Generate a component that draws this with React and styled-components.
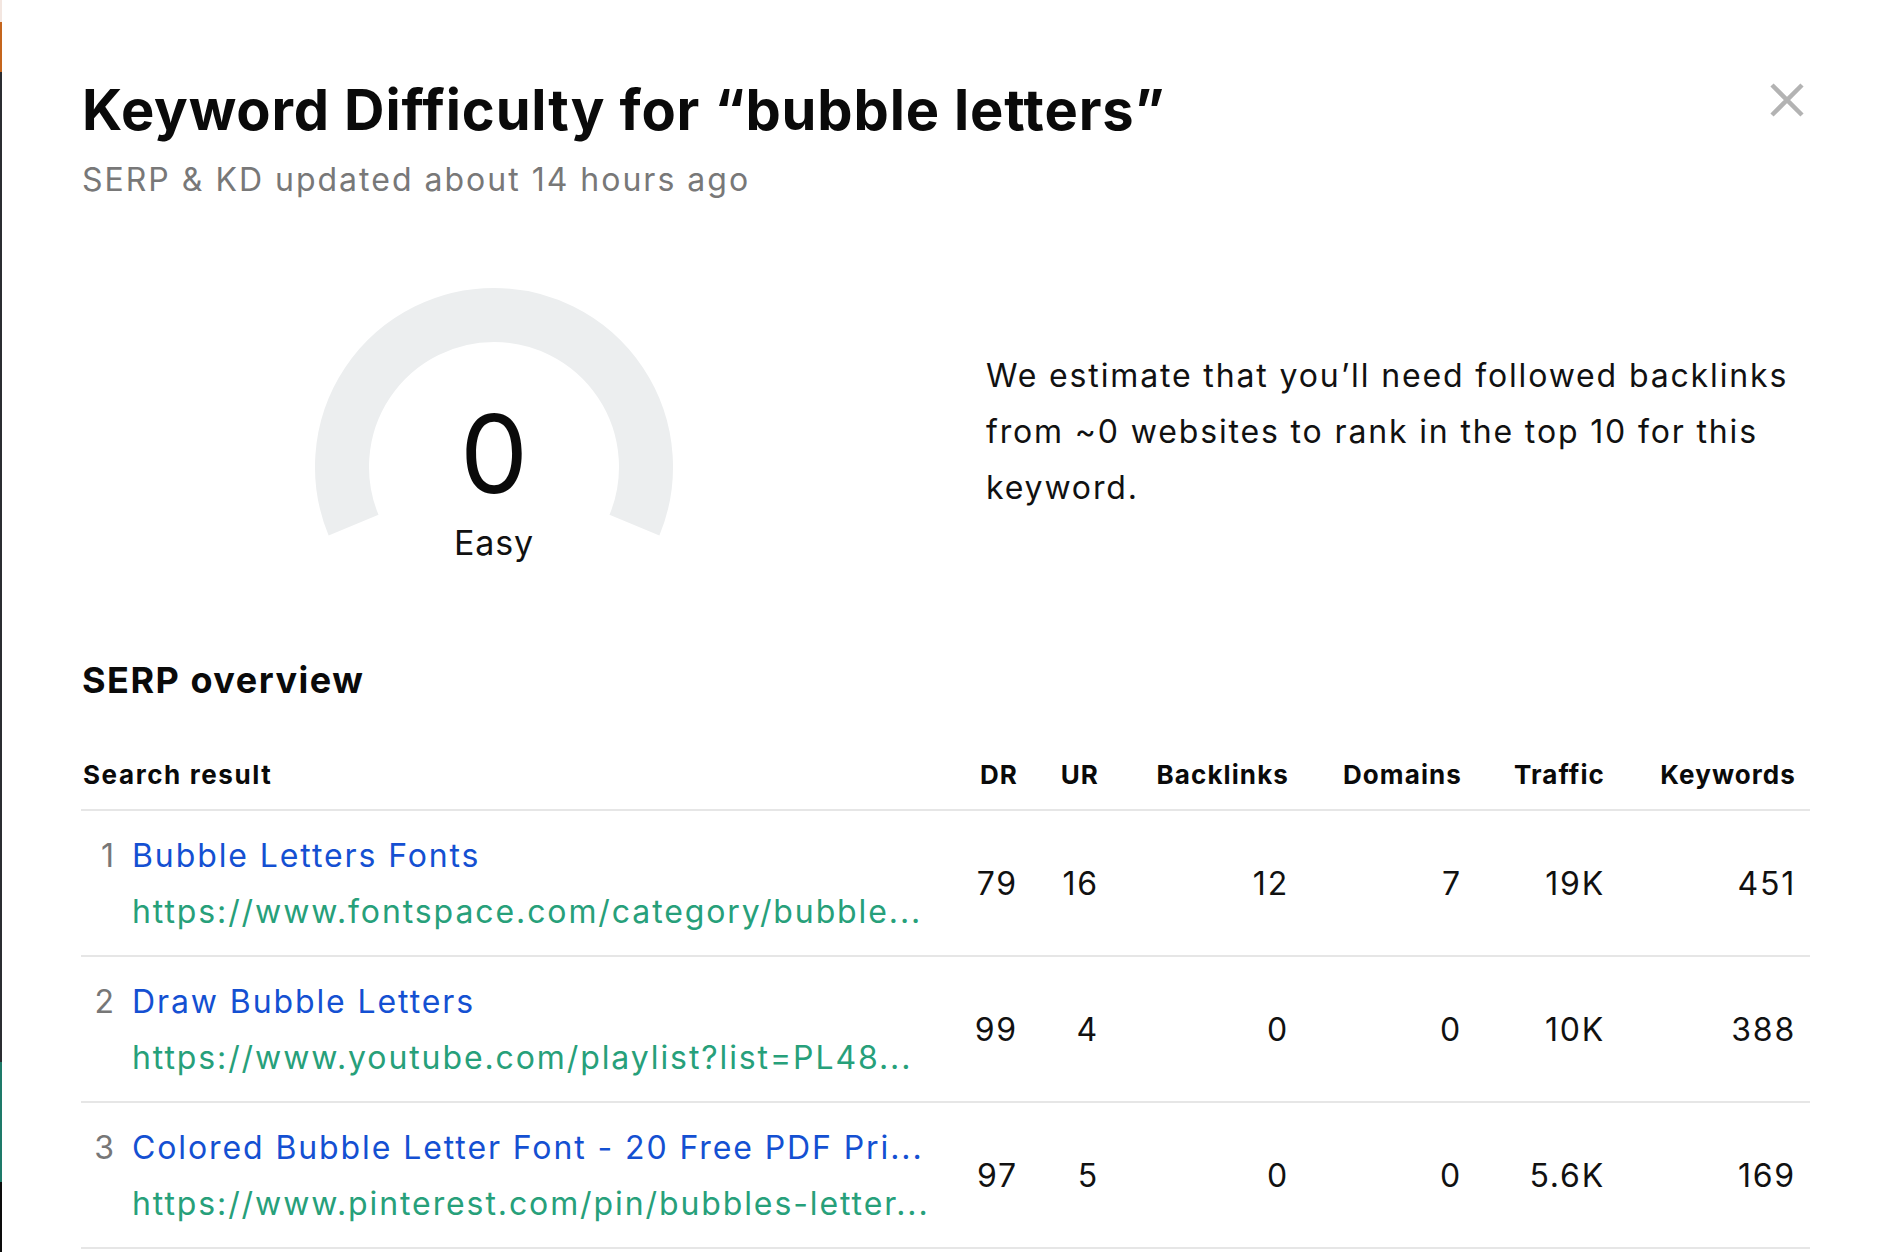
import React from "react";
import styled, { createGlobalStyle } from "styled-components";

const Global = createGlobalStyle`
  html, body { margin: 0; padding: 0; background: #ffffff; }
  body { font-family: Inter, "Noto Sans", "Liberation Sans", sans-serif; color: #111111; }
  * { box-sizing: border-box; }
`;

const Page = styled.div`
  display: flex;
  min-height: 1252px;
  width: 1888px;
`;

const Backdrop = styled.div`
  flex: 0 0 2px;
  background: linear-gradient(
    to bottom,
    #f3e6e0 0px, #f3e6e0 22px,
    #c5651d 22px, #c5651d 72px,
    #2b2d31 72px, #2b2d31 1062px,
    #1e7a69 1062px, #1e7a69 1182px,
    #0c0c0c 1182px
  );
`;

const Modal = styled.div`
  flex: 1;
  background: #ffffff;
  padding: 76px 78px 0 80px;
  display: flex;
  flex-direction: column;
`;

const Header = styled.div`
  display: flex;
  justify-content: space-between;
  align-items: flex-start;
`;

const TitleBlock = styled.div`
  display: flex;
  flex-direction: column;
`;

const Title = styled.h1`
  margin: 0;
  font-size: 56px;
  line-height: 68px;
  font-weight: 700;
  letter-spacing: 0.85px;
  color: #0a0a0a;
`;

const Subtitle = styled.div`
  margin-top: 12px;
  font-size: 32px;
  line-height: 48px;
  letter-spacing: 2px;
  color: #787878;
`;

const CloseButton = styled.button`
  margin-top: 1px;
  width: 46px;
  height: 46px;
  border: 0;
  padding: 0;
  background: transparent;
  display: flex;
  align-items: center;
  justify-content: center;
  cursor: pointer;
`;

const Summary = styled.div`
  margin-top: 84px;
  display: grid;
  grid-template-columns: 1fr 1fr;
  column-gap: 80px;
  align-items: start;
`;

const Gauge = styled.div`
  justify-self: center;
  position: relative;
  width: 360px;
  height: 276px;
  display: flex;
  flex-direction: column;
  align-items: center;
  padding-top: 112px;
`;

const GaugeArc = styled.svg`
  position: absolute;
  left: 0;
  top: 0;
`;

const Score = styled.div`
  position: relative;
  font-size: 108px;
  line-height: 108px;
  font-weight: 400;
  color: #0a0a0a;
`;

const ScoreLabel = styled.div`
  position: relative;
  margin-top: 15px;
  font-size: 34px;
  line-height: 40px;
  letter-spacing: 0.8px;
  color: #111111;
`;

const Estimate = styled.p`
  margin: 60px 0 0;
  font-size: 32px;
  line-height: 56px;
  letter-spacing: 1.85px;
  color: #111111;
`;

const SectionTitle = styled.h2`
  margin: 94px 0 0;
  font-size: 36px;
  line-height: 44px;
  font-weight: 700;
  letter-spacing: 1.5px;
  color: #0a0a0a;
`;

const Table = styled.div`
  margin-top: 57px;
  margin-left: -1px;
  display: grid;
  grid-template-columns: 1fr 90px 81px 190px 173px 143px 191px;
`;

const HeadCell = styled.div`
  font-size: 26px;
  line-height: 32px;
  font-weight: 700;
  letter-spacing: ${(p) => (p.$left ? "1.6px" : "1.1px")};
  color: #0a0a0a;
  padding: 0 ${(p) => (p.$left ? "0" : "14px")} 18px ${(p) => (p.$left ? "2px" : "0")};
  text-align: ${(p) => (p.$left ? "left" : "right")};
  border-bottom: 2px solid #e6e6e6;
`;

const Cell = styled.div`
  display: flex;
  align-items: center;
  justify-content: flex-end;
  padding: 0 14px 0 0;
  font-size: 32px;
  letter-spacing: 1.8px;
  color: #111111;
  border-bottom: 2px solid #e6e6e6;
  height: 146px;
`;

const ResultCell = styled.div`
  display: flex;
  align-items: flex-start;
  padding: 17px 0 15px 0;
  border-bottom: 2px solid #e6e6e6;
  height: 146px;
  min-width: 0;
`;

const Rank = styled.div`
  flex: 0 0 33px;
  text-align: right;
  font-size: 32px;
  line-height: 56px;
  color: #777777;
  margin-right: 18px;
`;

const ResultText = styled.div`
  display: flex;
  flex-direction: column;
  min-width: 0;
  font-size: 32px;
  line-height: 56px;
  letter-spacing: 1.9px;
  white-space: nowrap;
`;

const ResultTitle = styled.span`
  color: #1450d2;
`;

const ResultUrl = styled.span`
  color: #27a07a;
`;

const CloseIcon = () => (
  <svg width="34" height="34" viewBox="0 0 34 34">
    <path d="M2 2 L32 32 M32 2 L2 32" stroke="#b3b3b3" strokeWidth="4.5" strokeLinecap="butt" />
  </svg>
);

const polar = (cx, cy, r, deg) => {
  const a = (deg * Math.PI) / 180;
  return [cx + r * Math.cos(a), cy + r * Math.sin(a)];
};

const GaugeDrawing = () => {
  const cx = 180;
  const cy = 179;
  const r = 152;
  const [x1, y1] = polar(cx, cy, r, 157.5);
  const [x2, y2] = polar(cx, cy, r, 22.5);
  return (
    <GaugeArc width="360" height="252" viewBox="0 0 360 252">
      <path
        d={`M ${x1} ${y1} A ${r} ${r} 0 1 1 ${x2} ${y2}`}
        fill="none"
        stroke="#eceeef"
        strokeWidth="54"
      />
    </GaugeArc>
  );
};

const rows = [
  {
    rank: 1,
    title: "Bubble Letters Fonts",
    url: "https://www.fontspace.com/category/bubble...",
    values: ["79", "16", "12", "7", "19K", "451"],
  },
  {
    rank: 2,
    title: "Draw Bubble Letters",
    url: "https://www.youtube.com/playlist?list=PL48...",
    values: ["99", "4", "0", "0", "10K", "388"],
  },
  {
    rank: 3,
    title: "Colored Bubble Letter Font - 20 Free PDF Pri...",
    url: "https://www.pinterest.com/pin/bubbles-letter...",
    values: ["97", "5", "0", "0", "5.6K", "169"],
  },
];

const headers = ["DR", "UR", "Backlinks", "Domains", "Traffic", "Keywords"];

export default function App() {
  return (
    <>
      <Global />
      <Page>
        <Backdrop />
        <Modal>
          <Header>
            <TitleBlock>
              <Title>Keyword Difficulty for “bubble letters”</Title>
              <Subtitle>SERP &amp; KD updated about 14 hours ago</Subtitle>
            </TitleBlock>
            <CloseButton aria-label="Close">
              <CloseIcon />
            </CloseButton>
          </Header>

          <Summary>
            <Gauge>
              <GaugeDrawing />
              <Score>0</Score>
              <ScoreLabel>Easy</ScoreLabel>
            </Gauge>
            <Estimate>
              We estimate that you’ll need followed backlinks from ~0 websites to rank in the top 10 for this keyword.
            </Estimate>
          </Summary>

          <SectionTitle>SERP overview</SectionTitle>

          <Table>
            <HeadCell $left>Search result</HeadCell>
            {headers.map((h) => (
              <HeadCell key={h}>{h}</HeadCell>
            ))}
            {rows.map((r) => (
              <React.Fragment key={r.rank}>
                <ResultCell>
                  <Rank>{r.rank}</Rank>
                  <ResultText>
                    <ResultTitle>{r.title}</ResultTitle>
                    <ResultUrl>{r.url}</ResultUrl>
                  </ResultText>
                </ResultCell>
                {r.values.map((v, i) => (
                  <Cell key={i}>{v}</Cell>
                ))}
              </React.Fragment>
            ))}
          </Table>
        </Modal>
      </Page>
    </>
  );
}
